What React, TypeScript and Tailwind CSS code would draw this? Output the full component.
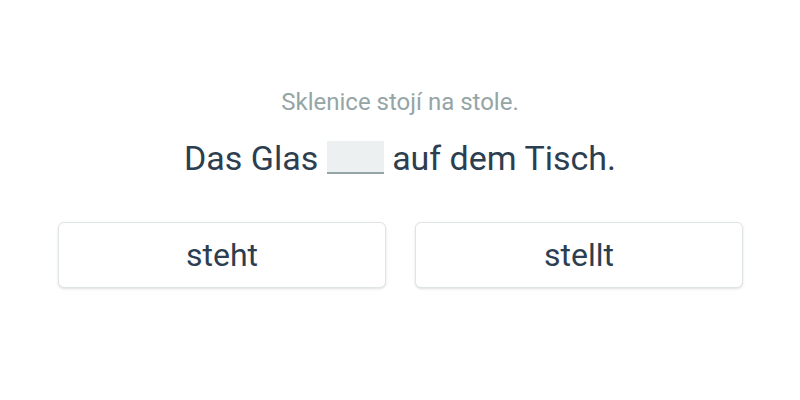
import * as React from "react";

const options = ["steht", "stellt"];

export default function App() {
  return (
    <div className="w-[800px] h-[400px] bg-white font-['Roboto',sans-serif] flex flex-col items-center pt-[86px]">
      <div className="text-[24px] leading-[32px] text-[#95a5a6]">Sklenice stojí na stole.</div>
      <div className="mt-[18px] text-[34px] leading-[44px] text-[#2c3e50] whitespace-pre">
        Das Glas{" "}
        <span className="inline-block align-[-4px] w-[57px] h-[33px] bg-[#ecf0f1] border-b-2 border-[#95a5a6]"></span>
        {" "}auf dem Tisch.
      </div>
      <div className="mt-[42px] w-full pl-[58px] pr-[57px] grid grid-cols-2 gap-[29px]">
        {options.map((o) => (
          <button
            key={o}
            className="h-[66px] rounded-md border border-[#dfe4e6] bg-white shadow-sm text-[32px] text-[#2c3e50]"
          >
            {o}
          </button>
        ))}
      </div>
    </div>
  );
}
